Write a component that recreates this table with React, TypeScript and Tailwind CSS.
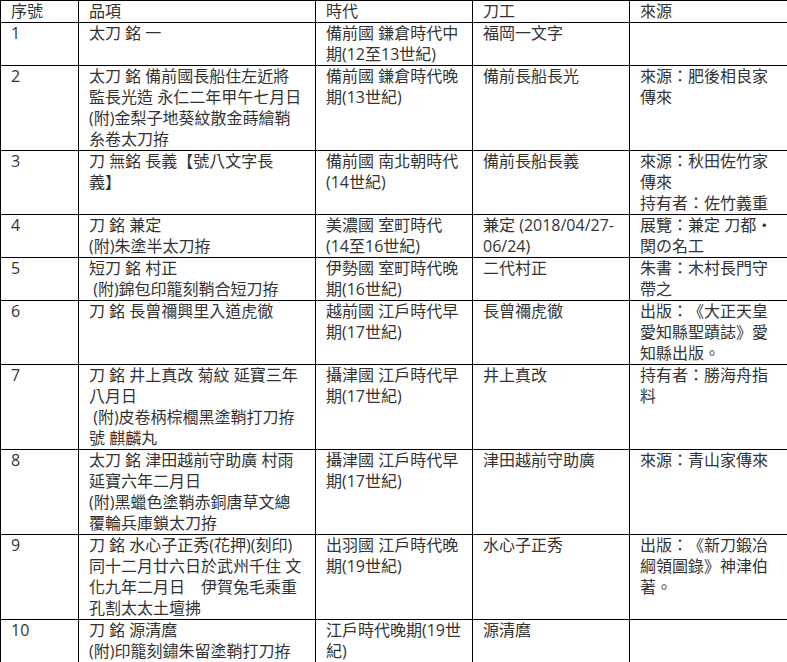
import React from 'react'

type Row = {
  no: string
  item: string[]
  era: string[]
  smith: string[]
  source: string[]
}

const rows: Row[] = [
  {
    no: '1',
    item: ['太刀 銘 一'],
    era: ['備前國 鎌倉時代中', '期(12至13世紀)'],
    smith: ['福岡一文字'],
    source: [],
  },
  {
    no: '2',
    item: ['太刀 銘 備前國長船住左近將', '監長光造 永仁二年甲午七月日', '(附)金梨子地葵紋散金蒔繪鞘', '糸卷太刀拵'],
    era: ['備前國 鎌倉時代晚', '期(13世紀)'],
    smith: ['備前長船長光'],
    source: ['來源：肥後相良家', '傳來'],
  },
  {
    no: '3',
    item: ['刀 無銘 長義【號八文字長', '義】'],
    era: ['備前國 南北朝時代', '(14世紀)'],
    smith: ['備前長船長義'],
    source: ['來源：秋田佐竹家', '傳來', '持有者：佐竹義重'],
  },
  {
    no: '4',
    item: ['刀 銘 兼定', '(附)朱塗半太刀拵'],
    era: ['美濃國 室町時代', '(14至16世紀)'],
    smith: ['兼定 (2018/04/27-', '06/24)'],
    source: ['展覽：兼定 刀都・', '関の名工'],
  },
  {
    no: '5',
    item: ['短刀 銘 村正', ' (附)錦包印籠刻鞘合短刀拵'],
    era: ['伊勢國 室町時代晚', '期(16世紀)'],
    smith: ['二代村正'],
    source: ['朱書：木村長門守', '帶之'],
  },
  {
    no: '6',
    item: ['刀 銘 長曾禰興里入道虎徹'],
    era: ['越前國 江戶時代早', '期(17世紀)'],
    smith: ['長曾禰虎徹'],
    source: ['出版：《大正天皇', '愛知縣聖蹟誌》愛', '知縣出版。'],
  },
  {
    no: '7',
    item: ['刀 銘 井上真改 菊紋 延寶三年', '八月日', ' (附)皮卷柄棕櫚黑塗鞘打刀拵', '號 麒麟丸'],
    era: ['攝津國 江戶時代早', '期(17世紀)'],
    smith: ['井上真改'],
    source: ['持有者：勝海舟指', '料'],
  },
  {
    no: '8',
    item: ['太刀 銘 津田越前守助廣 村雨', '延寶六年二月日', '(附)黑蠟色塗鞘赤銅唐草文總', '覆輪兵庫鎖太刀拵'],
    era: ['攝津國 江戶時代早', '期(17世紀)'],
    smith: ['津田越前守助廣'],
    source: ['來源：青山家傳來'],
  },
  {
    no: '9',
    item: ['刀 銘 水心子正秀(花押)(刻印)', '同十二月廿六日於武州千住 文', '化九年二月日　伊賀兔毛乘重', '孔割太太土壇拂'],
    era: ['出羽國 江戶時代晚', '期(19世紀)'],
    smith: ['水心子正秀'],
    source: ['出版：《新刀鍛冶', '綱領圖錄》神津伯', '著。'],
  },
  {
    no: '10',
    item: ['刀 銘 源清麿', '(附)印籠刻鏽朱留塗鞘打刀拵'],
    era: ['江戶時代晚期(19世', '紀)'],
    smith: ['源清麿'],
    source: [],
  },
]

const cell = 'border border-black align-top pl-[10px] pr-1 text-left font-normal'

function Lines({ lines }: { lines: string[] }) {
  return (
    <>
      {lines.map((l, i) => (
        <div key={i} className="whitespace-pre">
          {l}
        </div>
      ))}
    </>
  )
}

export default function App() {
  return (
    <div className="min-h-screen bg-white font-['Open_Sans','Noto_Sans_CJK_TC',sans-serif] text-[16px] leading-[21px] text-[#333] [text-spacing-trim:space-all]">
      <table className="w-[787px] table-fixed border-collapse">
        <colgroup>
          <col className="w-[78px]" />
          <col className="w-[237px]" />
          <col className="w-[157px]" />
          <col className="w-[157px]" />
          <col className="w-[158px]" />
        </colgroup>
        <thead>
          <tr>
            <th className={cell}>序號</th>
            <th className={cell}>品項</th>
            <th className={cell}>時代</th>
            <th className={cell}>刀工</th>
            <th className={cell}>來源</th>
          </tr>
        </thead>
        <tbody>
          {rows.map((r) => (
            <tr key={r.no}>
              <td className={cell}>{r.no}</td>
              <td className={cell}>
                <Lines lines={r.item} />
              </td>
              <td className={cell}>
                <Lines lines={r.era} />
              </td>
              <td className={cell}>
                <Lines lines={r.smith} />
              </td>
              <td className={cell}>
                <Lines lines={r.source} />
              </td>
            </tr>
          ))}
        </tbody>
      </table>
    </div>
  )
}
